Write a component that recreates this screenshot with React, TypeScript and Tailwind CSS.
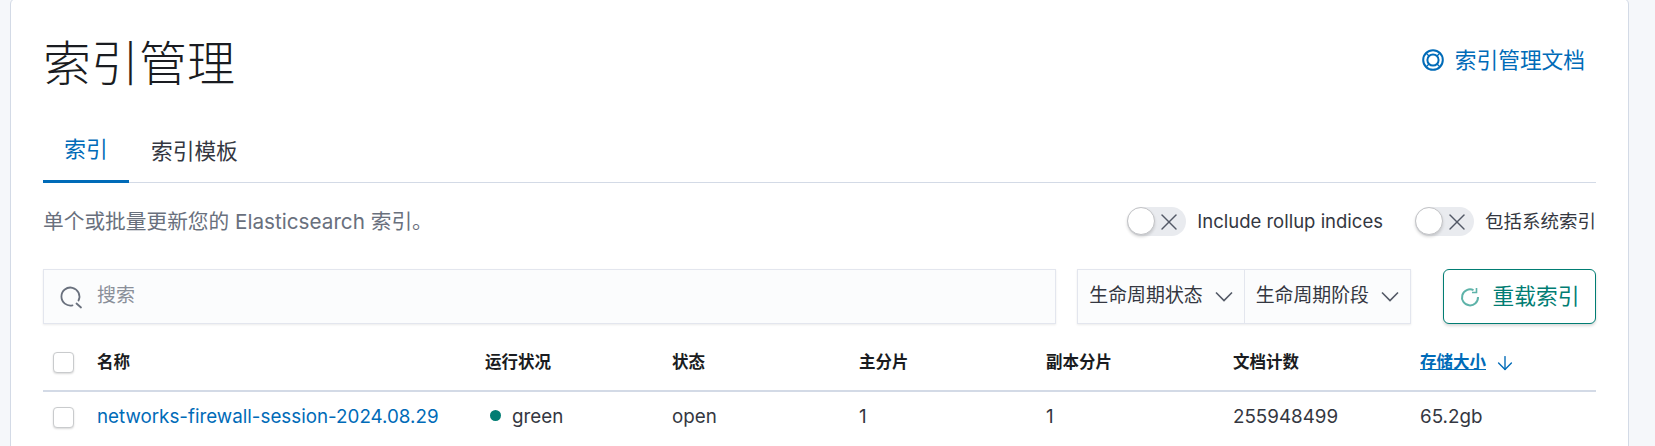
import { ArrowDown, X } from 'lucide-react';

const columns = ['运行状况', '状态', '主分片', '副本分片', '文档计数'];
const values = ['open', '1', '1', '255948499', '65.2gb'];

function Toggle({ label }: { label: string }) {
  return (
    <div className="flex items-center">
      <div className="relative flex h-[29px] w-[59px] items-center justify-end rounded-full bg-[#e9ebef] pr-[3px]">
        <span className="absolute left-0 top-0 h-[28px] w-[28px] rounded-full border border-[#c2c3c6] bg-white shadow-[0_2px_3px_rgba(0,0,0,0.15)]" />
        <X className="h-[28px] w-[28px] text-[#535966]" strokeWidth={1.2} />
      </div>
      <span className="ml-[11px] text-[18.5px] leading-none text-[#343741]">{label}</span>
    </div>
  );
}

function Checkbox() {
  return <div className="h-[21px] w-[21px] rounded-[4px] border border-[#c9cbcd] bg-white shadow-[0_1px_2px_rgba(0,0,0,0.15)]" />;
}

function FilterButton({ label }: { label: string }) {
  return (
    <div className="flex h-full items-center gap-[12px] px-[11px] text-[18.9px] text-[#343741]">
      <span>{label}</span>
      <svg width="18" height="11" viewBox="0 0 18 11" fill="none" stroke="#535966" strokeWidth="1.6">
        <path d="M1 1.5L9 9.5L17 1.5" />
      </svg>
    </div>
  );
}

export default function App() {
  return (
    <div className="h-[446px] overflow-hidden bg-[#f5f7fa] pl-[10px] pr-[26px] font-['Inter','Noto_Sans_CJK_SC',sans-serif]">
      <div className="-mt-[2px] h-[460px] rounded-[6px] border border-[#d3dae6] bg-white pl-[32px] pr-[32px]">
        <div className="flex items-start justify-between pt-[38px]">
          <h1 className="text-[48px] font-light leading-[54px] text-[#1a1c21]">索引管理</h1>
          <a className="mr-[11px] mt-[9px] flex items-center gap-[11px] text-[21.7px] leading-[28px] text-[#006bb8]">
            <svg width="22" height="22" viewBox="0 0 22 22" fill="none" stroke="#006bb8" strokeWidth="2">
              <circle cx="11" cy="11" r="9.8" />
              <circle cx="11" cy="11" r="5.6" />
              <path d="M4 4L7 7M18 4L15 7M4 18L7 15M18 18L15 15" strokeWidth="1.4" />
            </svg>
            索引管理文档
          </a>
        </div>

        <div className="mt-[30px] flex h-[62px] items-stretch border-b border-[#d3dae6]">
          <div className="-mb-px flex w-[86px] items-center justify-center border-b-[3px] border-[#006bb8] pb-[2px] text-[21.7px] text-[#006bb8]">索引</div>
          <div className="-mb-px flex items-center pb-[2px] pl-[22px] text-[21.7px] text-[#343741]">索引模板</div>
        </div>

        <div className="mt-[24px] flex h-[29px] items-center justify-between">
          <p className="text-[20.7px] text-[#69707d]">单个或批量更新您的 Elasticsearch 索引。</p>
          <div className="flex items-center gap-[32px]">
            <Toggle label="Include rollup indices" />
            <Toggle label="包括系统索引" />
          </div>
        </div>

        <div className="mt-[33px] flex h-[55px] items-stretch">
          <div className="flex flex-1 items-center border border-[#e3e6ee] bg-[#fbfcfd] pl-[15px] shadow-[0_1px_2px_rgba(0,0,0,0.08)]">
            <svg width="24" height="24" viewBox="0 0 24 24" fill="none" stroke="#69707d" strokeWidth="1.8" strokeLinecap="round">
              <path d="M13.5 20.3A9 9 0 1 1 19.5 15.5" />
              <path d="M17.5 18.5L22 22.5" />
            </svg>
            <span className="ml-[14px] text-[19px] text-[#8a8f99]">搜索</span>
          </div>
          <div className="ml-[21px] flex items-center border border-[#e3e6ee] bg-[#fbfcfd] shadow-[0_1px_2px_rgba(0,0,0,0.08)]">
            <FilterButton label="生命周期状态" />
            <div className="h-full w-px bg-[#e3e6ee]" />
            <FilterButton label="生命周期阶段" />
          </div>
          <div className="ml-[32px] flex w-[153px] items-center justify-center gap-[13px] rounded-[6px] border border-[#017d73] bg-white text-[21.7px] text-[#017d73] shadow-[0_2px_3px_rgba(0,0,0,0.15)]">
            <svg width="20" height="20" viewBox="0 0 20 20" fill="none" stroke="#5eb3a9" strokeWidth="2">
              <path d="M13.5 3.2A8 8 0 1 0 18 10" />
              <path d="M16.5 1V5.5H12" strokeWidth="1.6" />
            </svg>
            重载索引
          </div>
        </div>

        <div className="mt-[11px] grid h-[57px] grid-cols-[54px_388px_187px_187px_187px_187px_187px_1fr] items-center border-b-2 border-[#d3dae6]">
          <div className="pl-[10px]"><Checkbox /></div>
          <span className="text-[16.5px] font-bold text-[#1a1c21]">名称</span>
          {columns.map((c) => (
            <span key={c} className="text-[16.5px] font-bold text-[#1a1c21]">{c}</span>
          ))}
          <div className="flex items-center gap-[8px] text-[16.5px] font-bold text-[#006bb8]">
            <span className="underline">存储大小</span>
            <ArrowDown className="h-[22px] w-[22px]" strokeWidth={1.5} />
          </div>
        </div>

        <div className="grid h-[50px] grid-cols-[54px_388px_187px_187px_187px_187px_187px_1fr] items-center">
          <div className="pl-[10px]"><Checkbox /></div>
          <a className="text-[18.8px] text-[#006bb8]">networks-firewall-session-2024.08.29</a>
          <div className="flex items-center gap-[11px] pl-[5px] text-[18.8px] text-[#343741]">
            <span className="-mt-[4px] h-[11px] w-[11px] rounded-full bg-[#017d73]" />
            green
          </div>
          {values.map((v, i) => (
            <span key={i} className="text-[18.8px] text-[#343741]">{v}</span>
          ))}
        </div>
      </div>
    </div>
  );
}
